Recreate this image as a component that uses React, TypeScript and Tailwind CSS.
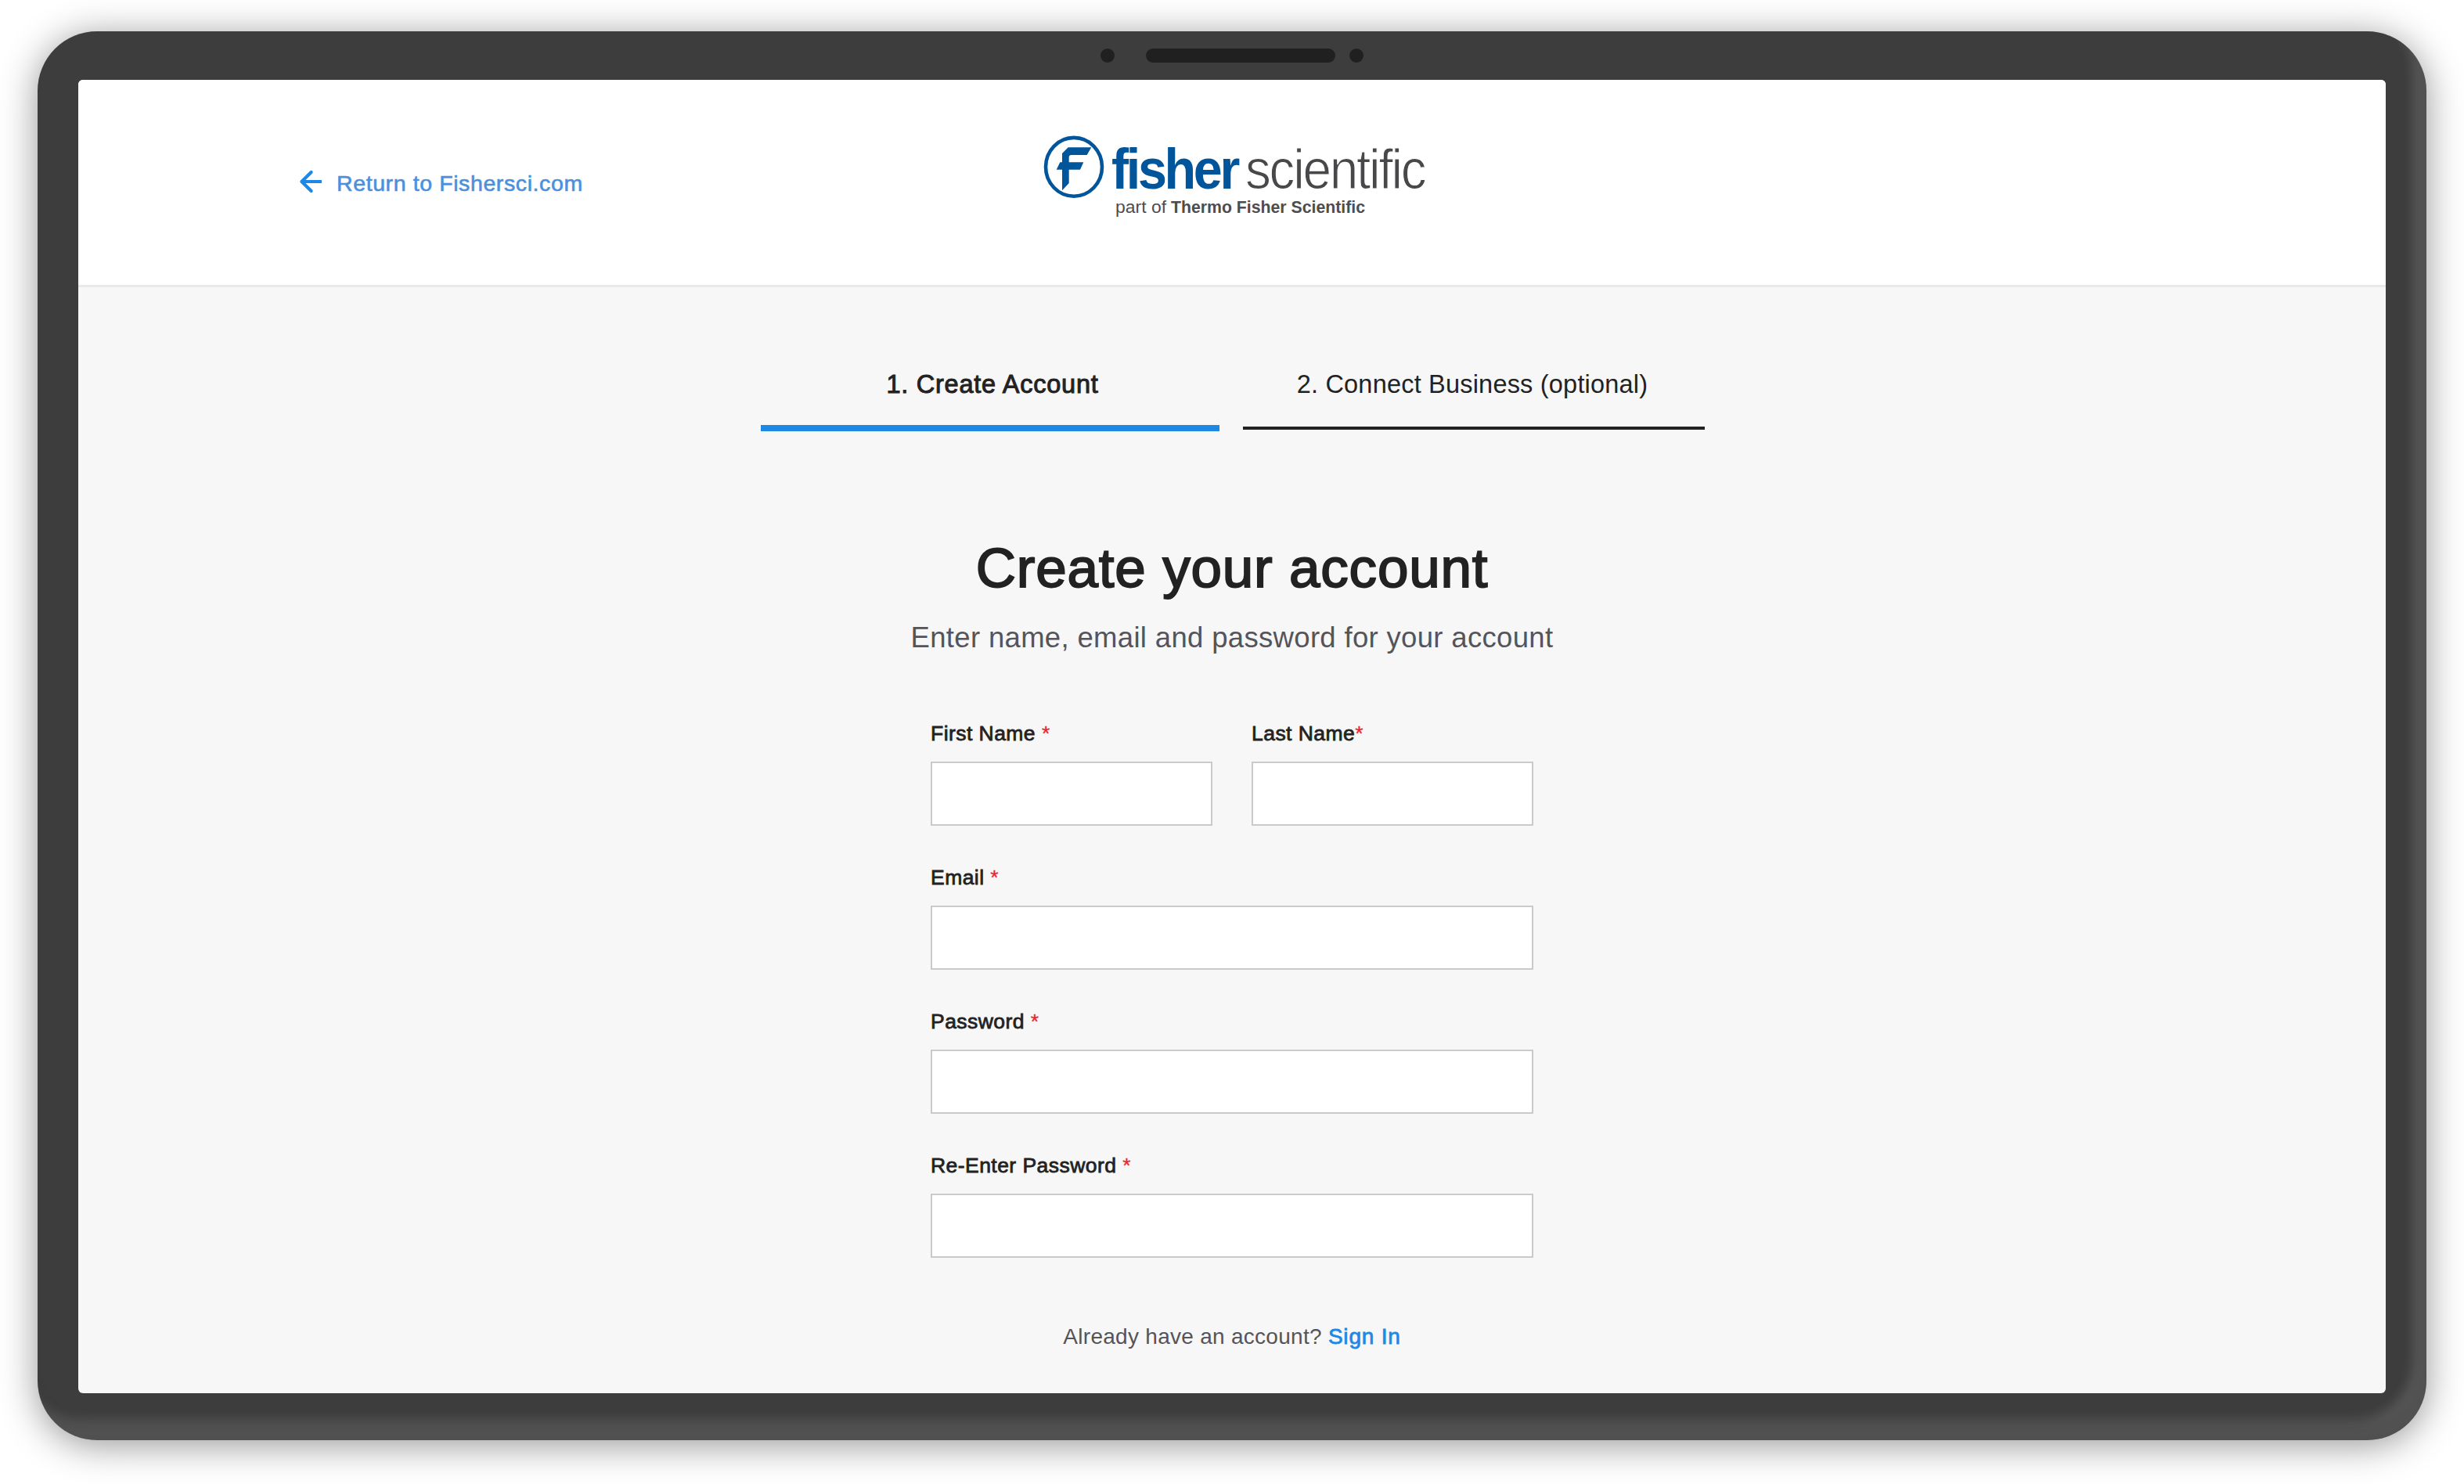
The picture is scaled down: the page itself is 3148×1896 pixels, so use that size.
function BackArrow() {
  return (
    <svg className="mt-[1px] h-[32px] w-[32px] shrink-0" viewBox="0 0 32 32" fill="none" stroke="#1e88e5" strokeWidth="4.2">
      <path d="M30 16H4" />
      <path d="M16.6 3.9L4.4 16l12.2 12.1" strokeLinecap="round" strokeLinejoin="round" />
    </svg>
  );
}

function FisherLogo() {
  return (
    <svg
      className="h-[112px] w-[512px]"
      viewBox="-8 0 512 112"
      role="img"
      aria-label="Fisher Scientific"
      fontFamily="'Liberation Sans', Arial, sans-serif"
    >
      <ellipse cx="46" cy="45.3" rx="36" ry="37.4" fill="none" stroke="#01569b" strokeWidth="4.6" />
      <path
        d="M38.7 20.3H68.3L62.7 30H43Q39.7 30 39.7 33V39.3H58.3L54 48.7H39.7V66L31 75.3V48.7H23.700L28.300 39.300H31V28Z"
        fill="#01569b"
      />
      <text transform="translate(94 72.7) scale(0.93 1)" fontSize="71.5" fontWeight="700" fill="#01569b" letterSpacing="-3.6">
        fisher
      </text>
      <text
        transform="translate(265 72.7) scale(0.9 1)"
        fontSize="73"
        fill="#48484a"
        stroke="#ffffff"
        strokeWidth="1.1"
        letterSpacing="-2.5"
      >
        scientific
      </text>
      <text x="99" y="104" fontSize="21.5" fill="#4d4d4f" textLength="65" lengthAdjust="spacingAndGlyphs">
        part of
      </text>
      <text x="170" y="104" fontSize="21.5" fontWeight="700" fill="#4d4d4f" textLength="248" lengthAdjust="spacingAndGlyphs">
        Thermo Fisher Scientific
      </text>
    </svg>
  );
}

function Field({ label, type = "text", tight = false }: { label: string; type?: string; tight?: boolean }) {
  return (
    <label className="flex flex-1 flex-col gap-[20px]">
      <span className="whitespace-pre text-[26.5px] leading-[32px] tracking-[0.45px] text-[#222222] [-webkit-text-stroke:0.8px_#222222]">
        {label}
        {tight ? "" : " "}
        <span className="text-[#e8262d] [-webkit-text-stroke:0.3px_#e8262d]">*</span>
      </span>
      <input type={type} className="h-[82px] w-full border-2 border-[#cacaca] bg-white px-4 text-[26px] outline-none" />
    </label>
  );
}

export default function App() {
  return (
    <div className="flex h-[1896px] w-[3148px] overflow-hidden bg-white px-[48px] pt-[40px] pb-[56px] font-['Liberation_Sans',Arial,sans-serif]">
      <div className="flex w-full flex-col rounded-[76px] bg-[#3d3d3d] px-[52px] pb-[60px] shadow-[0_6px_48px_rgba(0,0,0,0.42),inset_-4px_-20px_12px_rgba(0,0,0,0.06),inset_-18px_-26px_14px_rgba(255,255,255,0.13)]">
        <div className="flex h-[62px] shrink-0 items-center justify-center">
          <span className="mr-[40px] size-[18px] rounded-full bg-[#202020]" />
          <span className="h-[18px] w-[242px] rounded-full bg-[#202020]" />
          <span className="ml-[18px] size-[18px] rounded-full bg-[#202020]" />
        </div>
        <div className="flex flex-1 flex-col overflow-hidden rounded-[6px] bg-[#f7f7f7]">
          <header className="grid h-[265px] shrink-0 grid-cols-[1fr_auto_1fr] border-b-[3px] border-[#e9e9e9] bg-white pt-[66px]">
            <a href="#" className="mt-[32px] flex h-[62px] items-center gap-[17px] pl-[281px] text-[28.5px] text-[#4a90dc]">
              <BackArrow />
              <span className="pt-[5px] leading-[36px] tracking-[0.6px] [-webkit-text-stroke:0.6px_#4a90dc]">
                Return to Fishersci.com
              </span>
            </a>
            <FisherLogo />
          </header>
          <main className="flex flex-col items-center pt-[104px]">
            <nav className="grid grid-cols-[586px_590px] gap-[30px] pl-[2px] text-center text-[32.5px] leading-[40px] text-[#222222]">
              <div className="flex flex-col gap-[32px]">
                <span className="pl-[6px] tracking-[0.75px] [-webkit-text-stroke:1px_#222222]">1. Create Account</span>
                <span className="h-[8px] bg-[#1e88e5]" />
              </div>
              <div className="flex flex-col gap-[34px]">
                <span className="pr-[4px] tracking-[0.2px]">2. Connect Business (optional)</span>
                <span className="h-[4px] bg-[#222222]" />
              </div>
            </nav>
            <h1 className="mt-[135px] text-[71px] leading-[80px] tracking-[0.8px] text-[#222222] [-webkit-text-stroke:1.9px_#222222]">
              Create your account
            </h1>
            <p className="mt-[27px] text-[36.5px] leading-[44px] tracking-[0.33px] text-[#54545a]">
              Enter name, email and password for your account
            </p>
            <form className="mt-[84px] flex w-[770px] flex-col gap-[50px]">
              <div className="flex gap-[50px]">
                <Field label="First Name" />
                <Field label="Last Name" tight />
              </div>
              <Field label="Email" type="email" />
              <Field label="Password" type="password" />
              <Field label="Re-Enter Password" type="password" />
            </form>
            <p className="mt-[83px] text-[28px] leading-[36px] tracking-[0.28px] text-[#54545a]">
              Already have an account?{" "}
              <a href="#" className="tracking-[0.8px] text-[#1e88e5] [-webkit-text-stroke:0.8px_#1e88e5]">
                Sign In
              </a>
            </p>
          </main>
        </div>
      </div>
    </div>
  );
}
